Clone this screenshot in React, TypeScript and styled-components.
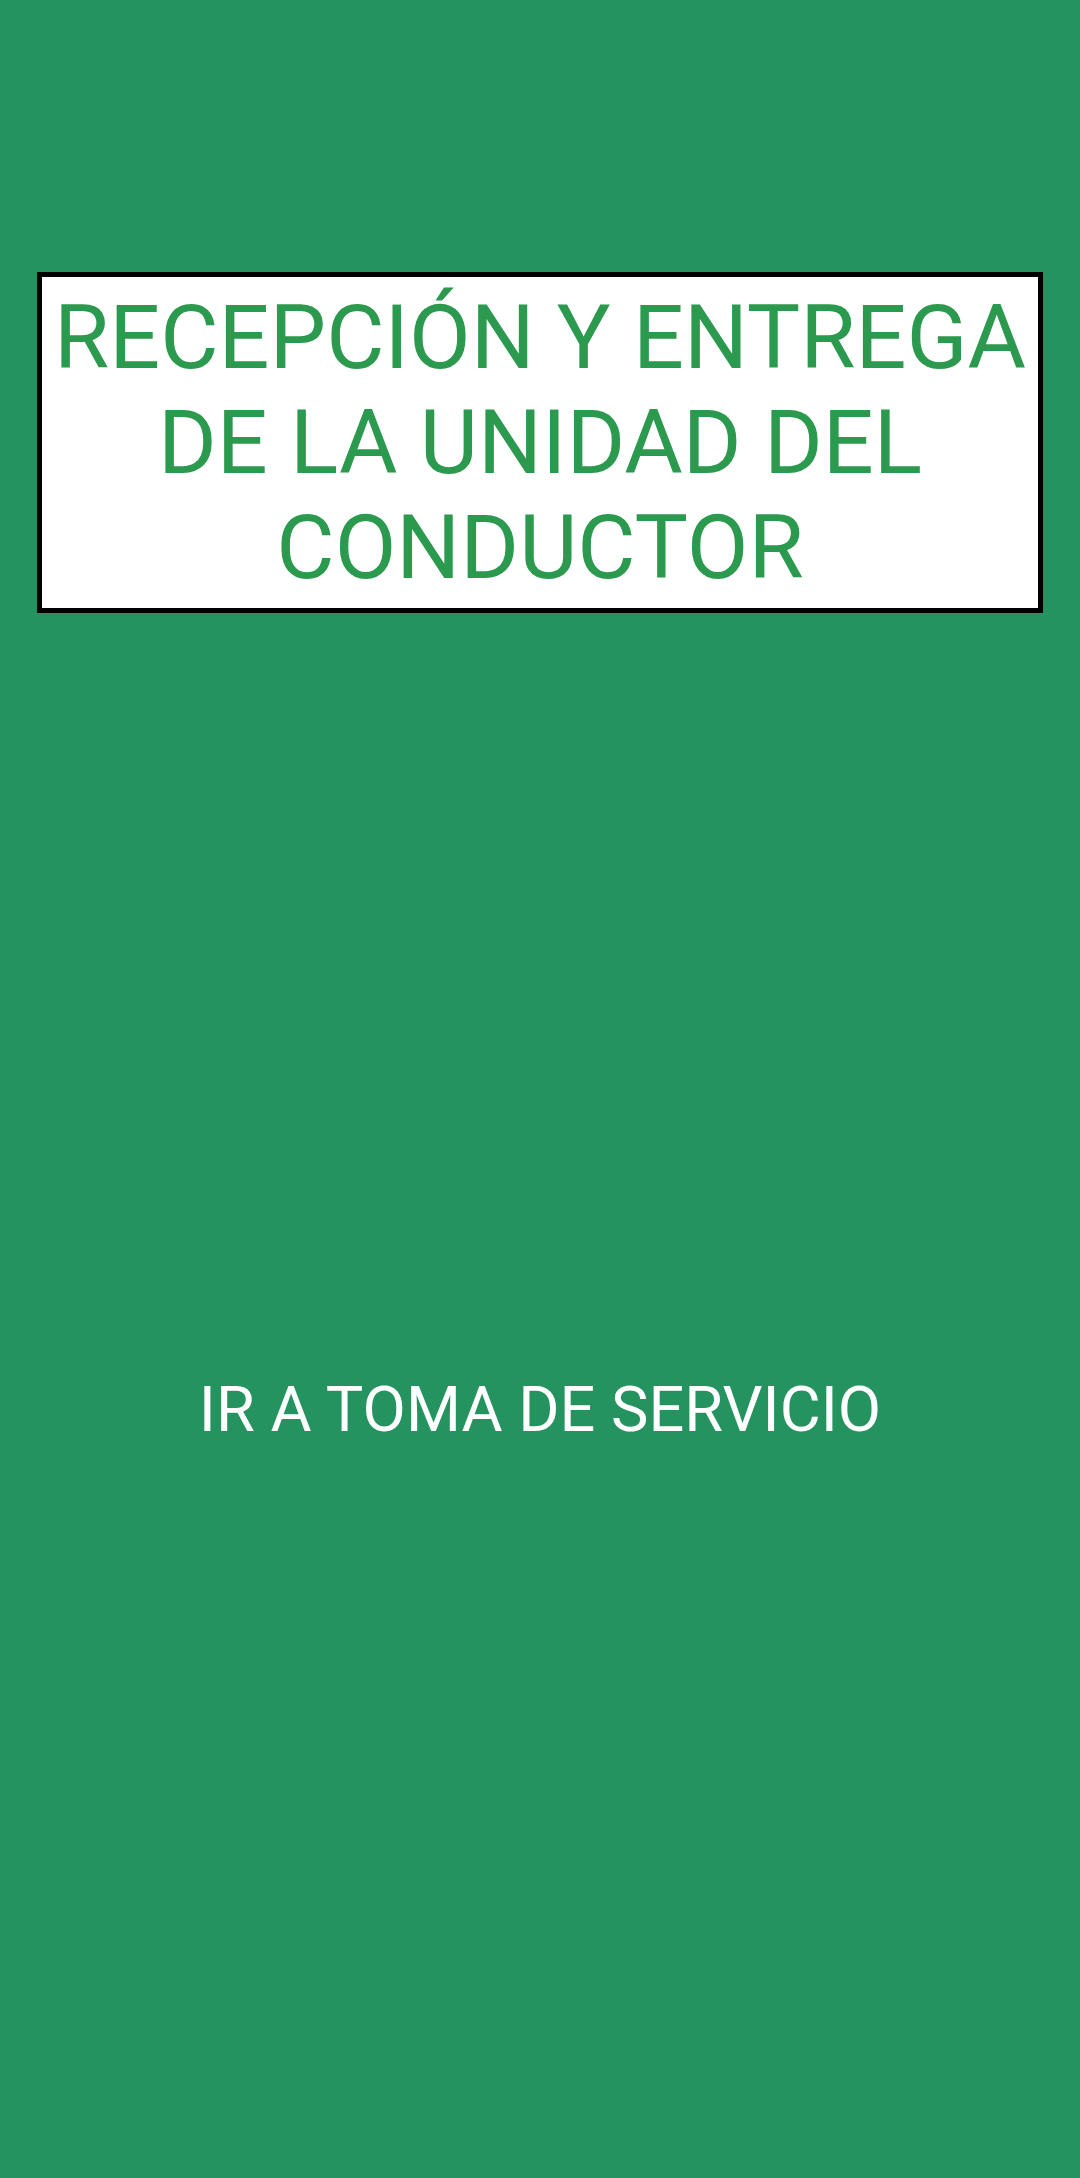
import React from "react";
import styled, { createGlobalStyle } from "styled-components";

const Global = createGlobalStyle`
  html, body { margin: 0; padding: 0; background: #25935f; }
  #root { min-height: 2178px; }
`;

const Page = styled.div`
  min-height: 2178px;
  background: #25935f;
  display: flex;
  flex-direction: column;
  align-items: center;
  padding-top: 272px;
  box-sizing: border-box;
  font-family: Roboto, "Noto Sans", sans-serif;
`;

const TitleBox = styled.div`
  width: 1006px;
  box-sizing: border-box;
  background: #ffffff;
  border: 5px solid #000000;
  padding: 8px 0 8px;
  text-align: center;
`;

const Title = styled.h1`
  margin: 0;
  font-family: Roboto, "Noto Sans", sans-serif;
  font-weight: 400;
  font-size: 89.7px;
  line-height: 105px;
  color: #2b9a4f;
`;

const ActionButton = styled.button`
  flex: 1;
  width: 100%;
  margin-top: 28px;
  background: transparent;
  border: none;
  display: flex;
  align-items: center;
  justify-content: center;
  font-family: Roboto, "Noto Sans", sans-serif;
  font-weight: 400;
  font-size: 63px;
  color: #ffffff;
  cursor: pointer;
  padding: 0;
`;

export default function App() {
  return (
    <>
      <Global />
      <Page>
        <TitleBox>
          <Title>
            RECEPCIÓN Y ENTREGA
            <br />
            DE LA UNIDAD DEL
            <br />
            CONDUCTOR
          </Title>
        </TitleBox>
        <ActionButton>IR A TOMA DE SERVICIO</ActionButton>
      </Page>
    </>
  );
}
